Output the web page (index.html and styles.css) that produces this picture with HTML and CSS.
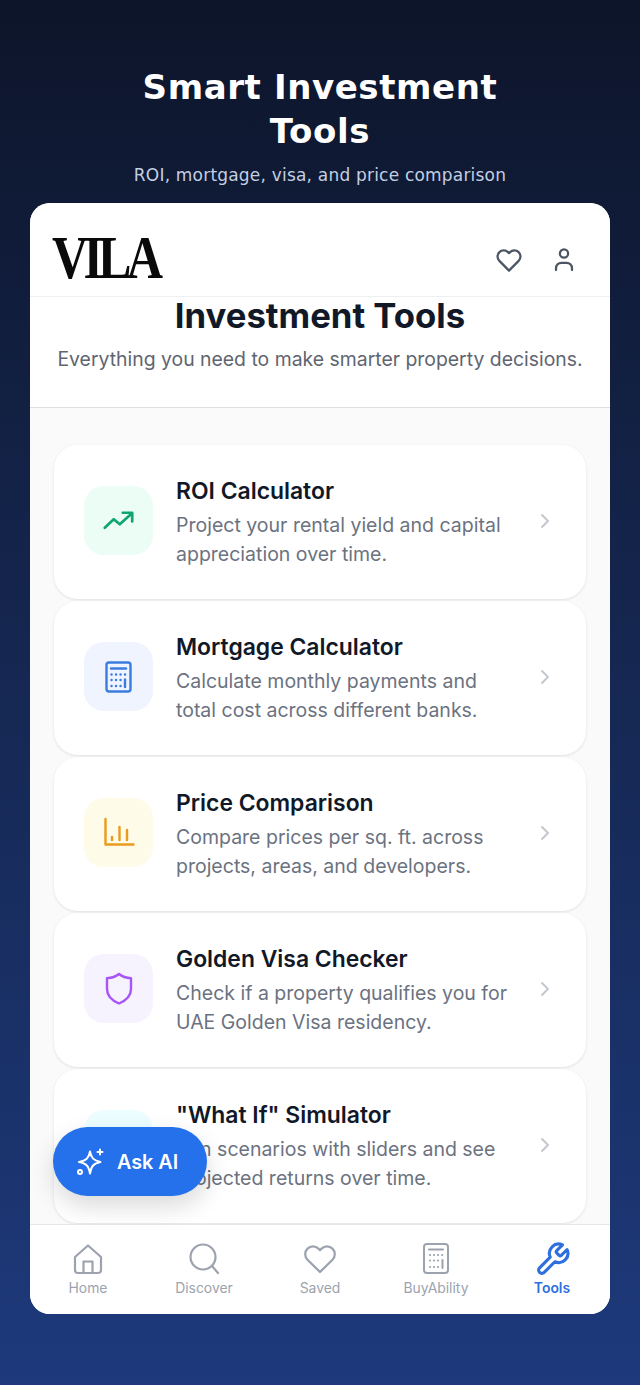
FILE: index.html
```html
<!DOCTYPE html>
<html>
<head>
    <title>Smart Investment Tools</title>
    <link rel="stylesheet" href="styles.css">
</head>

<body>
    <header class="hero">
        <h1>Smart Investment<br>Tools</h1>
        <p>ROI, mortgage, visa, and price comparison</p>
    </header>

    <main class="phone">
        <div class="topbar">
            <div class="logo">VILA</div>
            <div class="topbar-icons">
                <svg width="30" height="30" viewBox="0 0 24 24" fill="none" stroke="#4b5563" stroke-width="1.8" stroke-linejoin="round"><path d="M12 20.5 4.3 12.7a4.9 4.9 0 0 1 0-7 4.8 4.8 0 0 1 6.9 0l.8.8.8-.8a4.8 4.8 0 0 1 6.9 0 4.9 4.9 0 0 1 0 7z"/></svg>
                <svg width="30" height="30" viewBox="0 0 24 24" fill="none" stroke="#4b5563" stroke-width="1.8" stroke-linecap="round"><circle cx="12" cy="6.8" r="3.3"/><path d="M5.6 20v-1.5a4.3 4.3 0 0 1 4.3-4.3h4.2a4.3 4.3 0 0 1 4.3 4.3V20"/></svg>
            </div>
        </div>

        <div class="page-head">
            <h2>Investment Tools</h2>
            <p>Everything you need to make smarter property decisions.</p>
        </div>

        <div class="tool-list">
            <div class="tool-card">
                <div class="tool-icon green">
                    <svg width="36" height="36" viewBox="0 0 24 24" fill="none" stroke="#10a56f" stroke-width="1.8" stroke-linecap="round" stroke-linejoin="round"><path d="M2.5 16.5 8.5 10.8l4 3.4L20.5 7"/><path d="M14.5 6.5h6.3v5.8"/></svg>
                </div>
                <div class="tool-text">
                    <h3>ROI Calculator</h3>
                    <p>Project your rental yield and capital appreciation over time.</p>
                </div>
                <svg class="chevron" width="20" height="20" viewBox="0 0 20 20" fill="none" stroke="#c2c6cd" stroke-width="1.8" stroke-linecap="round" stroke-linejoin="round"><path d="m7 4 6 6-6 6"/></svg>
            </div>

            <div class="tool-card">
                <div class="tool-icon blue">
                    <svg width="36" height="36" viewBox="0 0 36 36" fill="none" stroke="#3b7ddd" stroke-width="2.4" stroke-linecap="round"><rect x="5.500" y="3.500" width="24" height="29" rx="2.500"/><path d="M10 9.500h15"/><path d="M10.500 15.500h.1M15 15.500h.1M19.500 15.500h.1M24 15.500h.1M10.500 21h.1M15 21h.1M19.500 21h.1M10.500 27h.1M15 27h.1M19.500 27h.1M24 20.500V28"/></svg>
                </div>
                <div class="tool-text">
                    <h3>Mortgage Calculator</h3>
                    <p>Calculate monthly payments and total cost across different banks.</p>
                </div>
                <svg class="chevron" width="20" height="20" viewBox="0 0 20 20" fill="none" stroke="#c2c6cd" stroke-width="1.8" stroke-linecap="round" stroke-linejoin="round"><path d="m7 4 6 6-6 6"/></svg>
            </div>

            <div class="tool-card">
                <div class="tool-icon yellow">
                    <svg width="36" height="36" viewBox="0 0 36 36" fill="none" stroke="#ea9a1c" stroke-width="2.4" stroke-linecap="round" stroke-linejoin="round"><path d="M4.500 4v25.500h28"/><path d="M11 22v3M18.500 12v13M26 15v10"/></svg>
                </div>
                <div class="tool-text">
                    <h3>Price Comparison</h3>
                    <p>Compare prices per sq. ft. across projects, areas, and developers.</p>
                </div>
                <svg class="chevron" width="20" height="20" viewBox="0 0 20 20" fill="none" stroke="#c2c6cd" stroke-width="1.8" stroke-linecap="round" stroke-linejoin="round"><path d="m7 4 6 6-6 6"/></svg>
            </div>

            <div class="tool-card">
                <div class="tool-icon purple">
                    <svg width="36" height="36" viewBox="0 0 36 36" fill="none" stroke="#a855f7" stroke-width="2.4" stroke-linejoin="round"><path d="M18 3c3 2.500 7 4 12 4.300V18c0 7-5 11.500-12 14.500C11 29.500 6 25 6 18V7.300C11 7 15 5.500 18 3z"/></svg>
                </div>
                <div class="tool-text">
                    <h3>Golden Visa Checker</h3>
                    <p>Check if a property qualifies you for UAE Golden Visa residency.</p>
                </div>
                <svg class="chevron" width="20" height="20" viewBox="0 0 20 20" fill="none" stroke="#c2c6cd" stroke-width="1.8" stroke-linecap="round" stroke-linejoin="round"><path d="m7 4 6 6-6 6"/></svg>
            </div>

            <div class="tool-card">
                <div class="tool-icon teal"></div>
                <div class="tool-text">
                    <h3>"What If" Simulator</h3>
                    <p>Run scenarios with sliders and see projected returns over time.</p>
                </div>
                <svg class="chevron" width="20" height="20" viewBox="0 0 20 20" fill="none" stroke="#c2c6cd" stroke-width="1.8" stroke-linecap="round" stroke-linejoin="round"><path d="m7 4 6 6-6 6"/></svg>
            </div>
        </div>

        <button class="ask-ai">
            <svg width="30" height="30" viewBox="0 0 30 30" fill="none" stroke="#fff" stroke-width="2" stroke-linecap="round" stroke-linejoin="round"><path d="M15 4.500c1.200 6.500 3.500 9 10.500 10.500-7 1.500-9.300 4-10.500 11.500C13.800 19 11.500 16.500 4 15c7.500-1.500 9.800-4 11-10.500z"/><path d="M25 2.500v5M22.500 5h5"/><circle cx="5" cy="25" r="2"/></svg>
            <span>Ask AI</span>
        </button>

        <nav class="bottom-nav">
            <a class="nav-item">
                <svg width="34" height="34" viewBox="0 0 34 34" fill="none" stroke="#9ca3af" stroke-width="2.200" stroke-linejoin="round"><path d="M4 15 17 3.500 30 15v13a3 3 0 0 1-3 3H7a3 3 0 0 1-3-3z"/><path d="M12.500 31V19.500h9V31"/></svg>
                <span>Home</span>
            </a>
            <a class="nav-item">
                <svg width="34" height="34" viewBox="0 0 34 34" fill="none" stroke="#9ca3af" stroke-width="2.200" stroke-linecap="round"><circle cx="16" cy="15" r="12.500"/><path d="m25 24 6 7"/></svg>
                <span>Discover</span>
            </a>
            <a class="nav-item">
                <svg width="34" height="34" viewBox="0 0 24 24" fill="none" stroke="#9ca3af" stroke-width="1.600" stroke-linejoin="round"><path d="M12 21.200 3.200 12.500a5.500 5.500 0 0 1 0-7.800 5.400 5.400 0 0 1 7.700 0l1.100 1 1.100-1a5.400 5.400 0 0 1 7.700 0 5.500 5.500 0 0 1 0 7.800z"/></svg>
                <span>Saved</span>
            </a>
            <a class="nav-item">
                <svg width="34" height="34" viewBox="0 0 34 34" fill="none" stroke="#9ca3af" stroke-width="2" stroke-linecap="round"><rect x="5" y="2" width="24" height="29" rx="3"/><path d="M10 7.500h14" /><path d="M11 13h.1M15 13h.1M19 13h.1M23 13h.1M11 18.500h.1M15 18.500h.1M19 18.500h.1M11 25h.1M15 25h.1M19 25h.1M23.500 18v8"/></svg>
                <span>BuyAbility</span>
            </a>
            <a class="nav-item active">
                <svg class="wrench" width="37" height="37" viewBox="0 0 24 24" fill="none" stroke="#2d6fdf" stroke-width="2" stroke-linecap="round" stroke-linejoin="round"><path d="M14.700 6.300a1 1 0 0 0 0 1.400l1.600 1.600a1 1 0 0 0 1.400 0l3.770-3.770a6 6 0 0 1-7.940 7.940l-6.910 6.910a2.120 2.120 0 0 1-3-3l6.910-6.910a6 6 0 0 1 7.940-7.940l-3.760 3.760z"/></svg>
                <span>Tools</span>
            </a>
        </nav>
    </main>
</body>
</html>
```

FILE: styles.css
```css
* {
    box-sizing: border-box;
}

html, body {
    margin: 0;
    padding: 0;
}

body {
    height: 1385px;
    overflow: hidden;
    font-family: Inter, sans-serif;
    background: linear-gradient(180deg, #0d152a 0%, #1e3a7c 100%);
}

.hero {
    padding: 65px 30px 0;
    height: 203px;
    text-align: center;
    font-family: "DejaVu Sans", sans-serif;
}

.hero h1 {
    margin: 0;
    color: #fff;
    font-size: 34px;
    line-height: 44px;
    font-weight: 700;
    letter-spacing: 0.6px;
}

.hero p {
    margin: 10px 0 0;
    color: #c3cfe2;
    font-size: 17px;
    line-height: 24px;
    letter-spacing: 0.2px;
}

.phone {
    position: relative;
    display: flex;
    flex-direction: column;
    width: 580px;
    height: 1111px;
    margin: 0 30px;
    border-radius: 20px;
    overflow: hidden;
    background: #fafafa;
}

.topbar {
    display: flex;
    align-items: center;
    justify-content: space-between;
    flex: none;
    height: 94px;
    padding: 20px 31px 0 22px;
    background: #fff;
    border-bottom: 1px solid #eeeff1;
}

.logo {
    width: 112px;
    margin-top: -5px;
    font-family: "Liberation Serif", serif;
    font-size: 62px;
    font-weight: 700;
    line-height: 60px;
    letter-spacing: -6px;
    color: #0a0a0a;
    transform: scaleX(0.81);
    transform-origin: left center;
    white-space: nowrap;
}

.topbar-icons {
    display: flex;
    gap: 25px;
}

.page-head {
    flex: none;
    height: 111px;
    text-align: center;
    background: #fff;
    border-bottom: 1px solid #dcdee2;
}

.page-head h2 {
    margin: -1px 0 0;
    color: #111827;
    font-size: 34.700px;
    line-height: 38px;
    font-weight: 700;
}

.page-head p {
    margin: 12px 0 0;
    color: #5f6570;
    font-size: 19.400px;
    line-height: 26px;
}

.tool-list {
    display: flex;
    flex-direction: column;
    gap: 2px;
    flex: 1;
    min-height: 0;
    padding: 37px 24px 0;
}

.tool-card {
    display: flex;
    align-items: center;
    flex: none;
    height: 154px;
    padding: 0 31px 0 30px;
    background: #fff;
    border-radius: 24px;
    box-shadow: 0 1px 3px rgba(0, 0, 0, 0.1);
}

.tool-icon {
    display: flex;
    align-items: center;
    justify-content: center;
    flex: none;
    width: 69px;
    height: 69px;
    margin-top: -3px;
    border-radius: 20px;
}

.green { background: #ecfdf5; }
.blue { background: #eff4fe; }
.yellow { background: #fefbe8; }
.purple { background: #f6f2fe; }
.teal { background: #ecfeff; }

.tool-text {
    flex: 1;
    min-width: 0;
    margin: 0 16px 0 23px;
    padding-top: 1px;
}

.tool-text h3 {
    margin: 0;
    color: #111827;
    font-size: 22.900px;
    line-height: 30px;
    font-weight: 600;
}

.tool-text p {
    margin: 5px 0 0;
    color: #6b7280;
    font-size: 19.500px;
    line-height: 29px;
}

.chevron {
    flex: none;
    margin-top: -2px;
}

.ask-ai {
    position: absolute;
    left: 23px;
    top: 924px;
    display: flex;
    align-items: center;
    gap: 12px;
    width: 154px;
    height: 69px;
    padding: 0 0 0 22px;
    border: none;
    border-radius: 35px;
    background: #2570eb;
    color: #fff;
    font-family: Inter, sans-serif;
    font-size: 19.800px;
    font-weight: 600;
    box-shadow: 0 10px 24px rgba(0, 0, 0, 0.15);
}

.bottom-nav {
    display: flex;
    flex: none;
    height: 90px;
    padding-top: 17px;
    background: #fff;
    border-top: 1px solid #e5e7eb;
}

.nav-item {
    display: flex;
    flex-direction: column;
    align-items: center;
    flex: 1;
    color: #9ca3af;
    font-size: 13.900px;
    line-height: 20px;
}

.nav-item span {
    margin-top: 2px;
}

.nav-item .wrench {
    margin: -1px 0 -2px;
}

.nav-item.active {
    color: #2d6fdf;
    font-weight: 600;
}
```
